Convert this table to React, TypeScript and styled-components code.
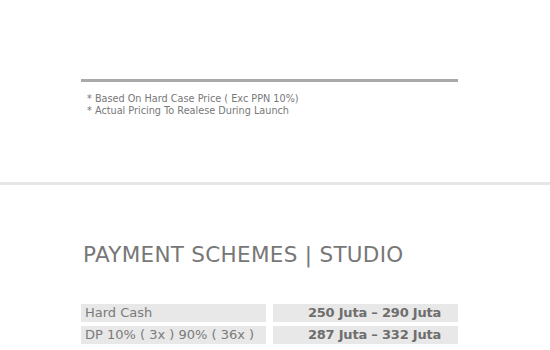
import styled, { createGlobalStyle } from "styled-components";

const GlobalStyle = createGlobalStyle`
  html, body {
    margin: 0;
    padding: 0;
    background: #ffffff;
  }
  body {
    font-family: "DejaVu Sans", "Open Sans", sans-serif;
    color: #777;
  }
`;

const schemes = [
  { name: "Hard Cash", price: "250 Juta – 290 Juta" },
  { name: "DP 10% ( 3x ) 90% ( 36x )", price: "287 Juta – 332 Juta" },
];

function App() {
  return (
    <Page>
      <GlobalStyle />
      <NotesSection>
        <Rule />
        <Notes>
          <li>* Based On Hard Case Price ( Exc PPN 10%)</li>
          <li>* Actual Pricing To Realese During Launch</li>
        </Notes>
      </NotesSection>
      <Divider />
      <SchemesSection>
        <Heading>PAYMENT SCHEMES | STUDIO</Heading>
        <Table>
          {schemes.map((s) => (
            <Row key={s.name}>
              <Cell>{s.name}</Cell>
              <Cell $price>{s.price}</Cell>
            </Row>
          ))}
        </Table>
      </SchemesSection>
    </Page>
  );
}

export default App;

const Page = styled.div`
  width: 550px;
  height: 350px;
  overflow: hidden;
`;

const NotesSection = styled.section`
  width: 377px;
  padding: 79px 0 0 81px;
  height: 103px;
`;

const Rule = styled.div`
  height: 3px;
  background: #a9a9a9;
`;

const Notes = styled.ul`
  list-style: none;
  margin: 0;
  padding: 11px 0 0 6px;
  font-size: 9.7px;
  line-height: 11.5px;
  color: #777;
`;

const Divider = styled.div`
  height: 3px;
  background: #e6e6e6;
`;

const SchemesSection = styled.section`
  width: 377px;
  padding: 57px 0 0 81px;
`;

const Heading = styled.h2`
  margin: 0 0 0 2px;
  font-size: 21.5px;
  font-weight: 400;
  line-height: 26px;
  letter-spacing: 0.3px;
  color: #777;
  white-space: nowrap;
`;

const Table = styled.div`
  margin-top: 36px;
  display: flex;
  flex-direction: column;
  gap: 4px;
`;

const Row = styled.div`
  display: grid;
  grid-template-columns: 185px 185px;
  column-gap: 7px;
`;

const Cell = styled.div<{ $price?: boolean }>`
  height: 18px;
  line-height: 18px;
  background: #e8e8e8;
  font-size: 13px;
  padding: ${(p) => (p.$price ? "0 0 0 18px" : "0 4px")};
  color: ${(p) => (p.$price ? "#6e6e6e" : "#7a7a7a")};
  font-weight: ${(p) => (p.$price ? 600 : 400)};
  letter-spacing: ${(p) => (p.$price ? "-0.2px" : "0")};
  text-align: ${(p) => (p.$price ? "center" : "left")};
  white-space: nowrap;
`;
